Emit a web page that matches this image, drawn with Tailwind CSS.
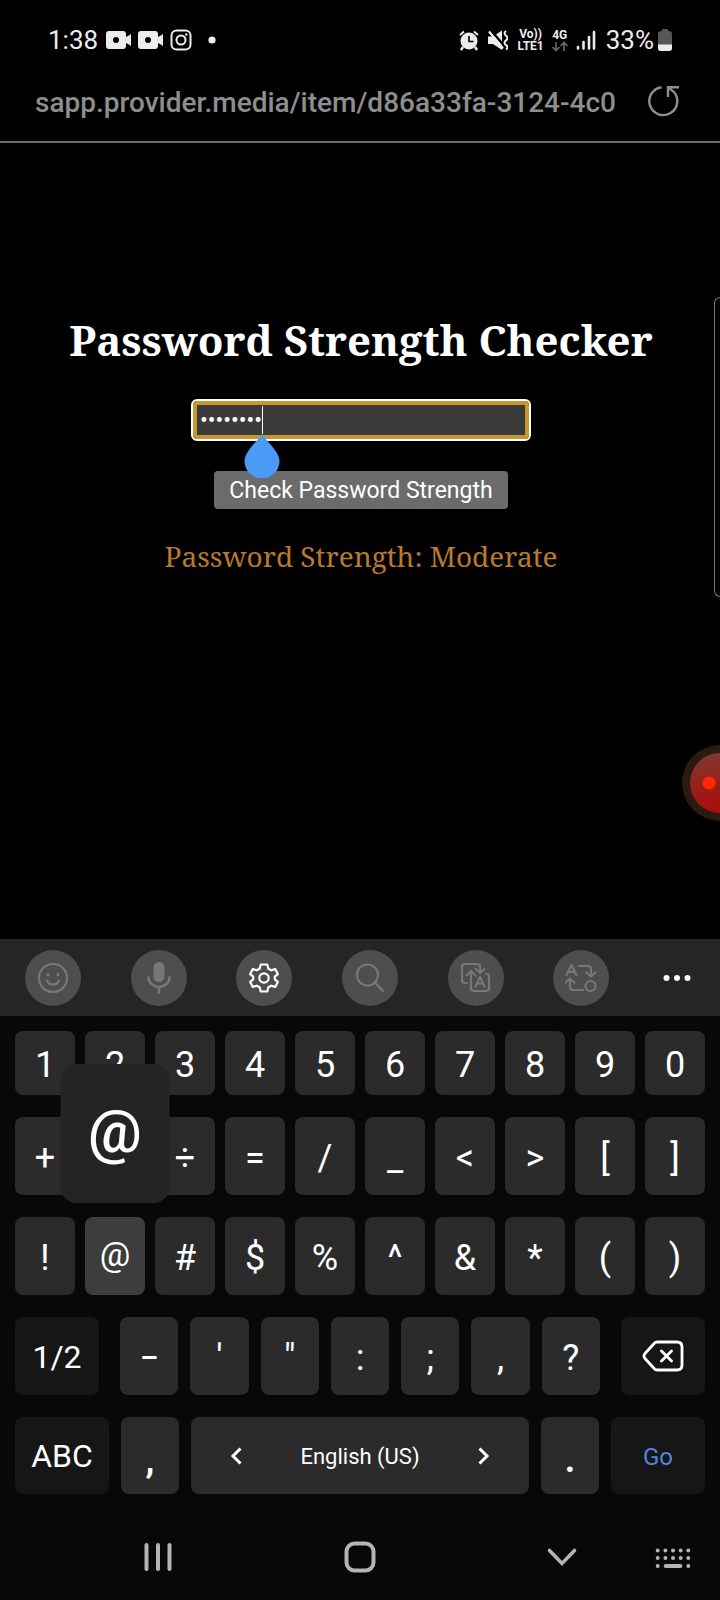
<!DOCTYPE html>
<html lang="en">
<head>
<meta charset="utf-8">
<meta name="viewport" content="width=device-width, initial-scale=1">
<title>Password Strength Checker</title>
<script src="https://cdn.jsdelivr.net/npm/@tailwindcss/browser@4"></script>
</head>
<body class="relative flex min-h-screen flex-col overflow-x-hidden bg-black font-['Roboto',sans-serif] text-white">

<!-- Status bar -->
<header class="flex h-16 items-center justify-between pt-4 pr-12 pl-12 text-[#ececec]">
  <div class="flex items-center">
    <span class="w-[58px] text-[26px] leading-8">1:38</span>
    <svg class="mr-1.5 h-[18px] w-[26px]" viewBox="0 0 26 18" fill="currentColor"><path fill-rule="evenodd" d="M3 0h14q3 0 3 3v3l2-1 3-2v12l-3-2-2-1v3q0 3-3 3H3q-3 0-3-3V3q0-3 3-3zm7 6a3 3 0 1 0 0 6 3 3 0 0 0 0-6z"/></svg>
    <svg class="mr-1.5 h-[18px] w-[26px]" viewBox="0 0 26 18" fill="currentColor"><path fill-rule="evenodd" d="M3 0h14q3 0 3 3v3l2-1 3-2v12l-3-2-2-1v3q0 3-3 3H3q-3 0-3-3V3q0-3 3-3zm7 6a3 3 0 1 0 0 6 3 3 0 0 0 0-6z"/></svg>
    <svg class="mr-4 h-[22px] w-[22px]" viewBox="0 0 22 22" fill="none" stroke="currentColor" stroke-width="2"><rect x="1.5" y="1.5" width="19" height="19" rx="5"/><circle cx="11" cy="11" r="4.5"/><circle cx="16.3" cy="5.5" r="1.2" fill="currentColor" stroke="none"/></svg>
    <svg class="h-2 w-2" viewBox="0 0 8 8" fill="currentColor"><circle cx="4" cy="4" r="3.6"/></svg>
  </div>
  <div class="flex items-center">
    <svg class="mr-[9px] h-[21px] w-5" viewBox="0 0 20 21" fill="none" stroke="currentColor"><circle cx="10" cy="11" r="8.500" fill="currentColor" stroke="none"/><path d="M1 5l4-3.500M19 5l-4-3.500" stroke-width="2"/><path d="M4 17l-2 3M16 17l2 3" stroke-width="2.500"/><path d="M10 6v5.500h4.500" stroke="#000" stroke-width="1.600"/></svg>
    <svg class="mr-[9px] h-[21px] w-5" viewBox="0 0 20 21" fill="currentColor"><path d="M0 6.500h5l9-6v19.500l-9-6H0z"/><path d="M1 -2l17 20" stroke="#000" stroke-width="2.500"/><path d="M1 1.500l14 17" stroke="currentColor" stroke-width="2.200"/><path d="M18 1q-3 2.300 0 4.700t0 4.700 0 4.700 0 4.400" fill="none" stroke="currentColor" stroke-width="2"/></svg>
    <span class="mr-2 flex flex-col items-center text-[12px] leading-[12px] font-bold"><span>Vo))</span><span>LTE1</span></span>
    <span class="mr-2 flex flex-col items-center text-[12px] leading-[12px] font-bold"><span>4G</span>
      <svg class="h-[11px] w-4" viewBox="0 0 16 11" fill="none" stroke="#666" stroke-width="1.700"><path d="M4 1v9M.5 6L4 9.500 7.500 6M12 10V1M8.500 5L12 1.500 15.500 5"/></svg></span>
    <svg class="mr-2.5 h-5 w-5" viewBox="0 0 20 20" fill="none" stroke="currentColor" stroke-width="2.600" stroke-linecap="round"><path d="M2 17v1.500M7.500 12v6.500M13 7v11.500M18 2v16.500"/></svg>
    <span class="mr-1 text-[26px] leading-8">33%</span>
    <svg class="h-[22px] w-[14px]" viewBox="0 0 14 22"><path d="M4 0h6v2h1q3 0 3 3v14q0 3-3 3H3q-3 0-3-3V5q0-3 3-3h1z" fill="#565656"/><path d="M0 15.500h14V19q0 3-3 3H3q-3 0-3-3z" fill="#ececec"/></svg>
  </div>
</header>

<!-- Address bar -->
<div class="flex h-[79px] items-center border-b-2 border-[#6b6b6b] pr-10 pl-[35px] text-[#8e8e8e]">
  <input type="text" aria-label="Address" readonly value="sapp.provider.media/item/d86a33fa-3124-4c0" class="h-10 min-w-0 flex-1 bg-transparent p-0 text-[28px] font-medium outline-none">
  <button aria-label="Reload" class="mb-1 ml-[30px] h-[34px] w-[32px]">
    <svg class="h-[34px] w-[32px]" viewBox="0 0 32 34" fill="none" stroke="currentColor" stroke-width="2.400"><path d="M13.500 3.200A14 14 0 1 0 25.500 7.500M20 13V3.200h11M20 3.200l6 5"/></svg>
  </button>
</div>

<!-- Page content -->
<main class="relative flex flex-1 flex-col items-center pt-[169px] pl-0.5 font-['Noto_Serif','Droid_Serif','DejaVu_Serif_Condensed','DejaVu_Serif',serif]">
  <h1 class="text-center text-[42px] leading-[56px] font-bold whitespace-nowrap">Password Strength Checker</h1>
  <div class="relative mt-[31px] w-[340px] max-w-full">
    <input type="password" aria-label="Password" value="password" class="block h-[42px] w-full rounded-md border-2 border-white bg-[#3b3b3b] px-[7px] font-['Roboto',sans-serif] text-[23px] text-white outline-4 -outline-offset-6 outline-[#c6982f]">
    <span class="absolute top-[7px] left-[71px] h-7 w-px bg-white"></span>
    <svg class="absolute top-[35px] left-[53px] z-10 h-11 w-9" viewBox="0 0 36 44" fill="#4a9af8"><path d="M18 0C21 6 35.500 17 35.500 27A17.500 17.500 0 0 1 .5 27C.5 17 15 6 18 0z"/></svg>
  </div>
  <button class="mt-[30px] h-[38px] rounded bg-[#6b6b6b] px-[15px] pt-0.5 font-['Roboto',sans-serif] text-[23px] leading-8 whitespace-nowrap">Check Password Strength</button>
  <p class="mt-[29px] text-[28px] leading-9 whitespace-nowrap text-[#b87a2c]">Password Strength: Moderate</p>

  <!-- Edge panel handle and recorder bubble -->
  <div class="absolute top-[154px] right-0 h-[300px] w-1.5 rounded-l-lg border border-r-0 border-[#777]"></div>
  <button aria-label="Stop recording" class="absolute top-[602px] right-0 h-[76px] w-[38px] overflow-hidden">
    <svg class="h-[76px] w-[38px]" viewBox="0 0 38 76"><defs><linearGradient id="rec" x1="0" y1="0" x2="0.300" y2="1"><stop offset="0" stop-color="#784032"/><stop offset=".5" stop-color="#95231c"/><stop offset="1" stop-color="#a80d0d"/></linearGradient></defs><circle cx="38" cy="38" r="38" fill="#2b1a10"/><circle cx="38" cy="38" r="30" fill="url(#rec)"/><circle cx="27" cy="38" r="6.500" fill="#ff2a05"/></svg>
  </button>
</main>

<!-- Keyboard -->
<section aria-label="Keyboard" class="bg-[#080808]">
  <div class="flex h-[77px] items-center justify-between bg-[#252525] pr-6 pl-[25px] text-[#777]">
    <button aria-label="Emoji" class="grid size-14 place-items-center rounded-full bg-[#4e4e4e]"><svg class="size-8" viewBox="0 0 32 32" fill="none" stroke="currentColor" stroke-width="2.200" stroke-linecap="round"><circle cx="16" cy="16" r="14"/><path d="M10 18.500q1.500 4 6 4t6-4"/><path d="M11 12.500v.2M21 12.500v.2" stroke-width="3.200"/></svg></button>
    <button aria-label="Voice input" class="grid size-14 place-items-center rounded-full bg-[#4e4e4e]"><svg class="size-8" viewBox="0 0 32 32" fill="none" stroke="currentColor" stroke-width="2.400" stroke-linecap="round"><rect x="10.500" y="0" width="11" height="20" rx="5.500" fill="currentColor" stroke="none"/><path d="M5.500 15.500a10.500 9.500 0 0 0 21 0M16 25v6"/></svg></button>
    <button aria-label="Settings" class="grid size-14 place-items-center rounded-full bg-[#4e4e4e] text-white"><svg class="size-8" viewBox="0 0 32 32" fill="none" stroke="currentColor" stroke-width="2.200" stroke-linejoin="round"><circle cx="16" cy="16" r="4.700"/><path d="M12.800 2.500h6.400l1.200 4.200 2.800 1.600 4-1.200 2.600 5-3 2.600v2.600l3 2.600-2.600 5-4-1.200-2.800 1.600-1.200 4.200h-6.400l-1.200-4.200-2.800-1.600-4 1.200-2.600-5 3-2.600v-2.600l-3-2.600 2.600-5 4 1.200 2.800-1.600z"/></svg></button>
    <button aria-label="Search" class="grid size-14 place-items-center rounded-full bg-[#4e4e4e]"><svg class="size-8" viewBox="0 0 32 32" fill="none" stroke="currentColor" stroke-width="2.200" stroke-linecap="round"><circle cx="13.500" cy="13" r="10.500"/><path d="M21 20.500l8 8.500"/></svg></button>
    <button aria-label="Translate" class="grid size-14 place-items-center rounded-full bg-[#4e4e4e]"><svg class="size-8" viewBox="0 0 32 32" fill="none" stroke="currentColor" stroke-width="2.200" stroke-linecap="round" stroke-linejoin="round"><path d="M7 21H5q-3 0-3-3V5q0-3 3-3h12q3 0 3 3v5M15.500 7l4.500 4 4.500-4M11 22V10M6.500 13.500L11 9l4.500 4.500M11 22v4q0 3 3 3h12q3 0 3-3V14q0-2-3-2"/><path d="M15.500 24.500L20 15l4.500 9.500M17 21.500h6"/></svg></button>
    <button aria-label="Text conversion" class="grid size-14 place-items-center rounded-full bg-[#4e4e4e]"><svg class="size-8" viewBox="0 0 32 32" fill="none" stroke="currentColor" stroke-width="2.200" stroke-linecap="round" stroke-linejoin="round"><path d="M1.500 13L6.500 3l5 10M3.500 10h6M14 4h9q3 0 3 3v7M21.500 10.500L26 14.500l4.500-4M18 28H8q-3 0-3-3v-8M.5 20.500L5 16.500l4.500 4"/><circle cx="25.500" cy="24" r="5"/></svg></button>
    <button aria-label="More" class="grid h-14 w-[37px] place-items-center text-white"><svg class="h-2 w-7" viewBox="0 0 28 8" fill="currentColor"><circle cx="3.500" cy="4" r="3"/><circle cx="14" cy="4" r="3"/><circle cx="24.500" cy="4" r="3"/></svg></button>
  </div>

  <div class="flex flex-col gap-[22px] px-[15px] pt-[15px] text-[36px]">
    <div class="grid h-16 grid-cols-10 gap-2.5">
      <button class="rounded-lg bg-[#2b2b2b] pt-1">1</button><button class="rounded-lg bg-[#2b2b2b] pt-1">2</button><button class="rounded-lg bg-[#2b2b2b] pt-1">3</button><button class="rounded-lg bg-[#2b2b2b] pt-1">4</button><button class="rounded-lg bg-[#2b2b2b] pt-1">5</button><button class="rounded-lg bg-[#2b2b2b] pt-1">6</button><button class="rounded-lg bg-[#2b2b2b] pt-1">7</button><button class="rounded-lg bg-[#2b2b2b] pt-1">8</button><button class="rounded-lg bg-[#2b2b2b] pt-1">9</button><button class="rounded-lg bg-[#2b2b2b] pt-1">0</button>
    </div>
    <div class="grid h-[78px] grid-cols-10 gap-2.5">
      <button class="rounded-lg bg-[#2b2b2b] pt-1">+</button><button aria-label="Multiply" class="rounded-lg bg-[#2b2b2b]"></button><button class="rounded-lg bg-[#2b2b2b] pt-1">÷</button><button class="rounded-lg bg-[#2b2b2b] pt-1">=</button><button class="rounded-lg bg-[#2b2b2b] pt-1">/</button><button class="rounded-lg bg-[#2b2b2b] pt-1">_</button><button class="rounded-lg bg-[#2b2b2b] pt-1">&lt;</button><button class="rounded-lg bg-[#2b2b2b] pt-1">&gt;</button><button class="rounded-lg bg-[#2b2b2b] pt-1">[</button><button class="rounded-lg bg-[#2b2b2b] pt-1">]</button>
    </div>
    <div class="grid h-[78px] grid-cols-10 gap-2.5">
      <button class="rounded-lg bg-[#2b2b2b] pt-1">!</button>
      <button class="relative rounded-lg bg-[#3d3d3d] pb-1 text-[34px]">@<span class="absolute bottom-full left-1/2 mb-3.5 flex h-[139px] w-[109px] -translate-x-1/2 items-center justify-center rounded-2xl bg-[#242424] pb-1 text-[60px] font-medium">@</span></button>
      <button class="rounded-lg bg-[#2b2b2b] pt-1">#</button><button class="rounded-lg bg-[#2b2b2b] pt-1">$</button><button class="rounded-lg bg-[#2b2b2b] pt-1">%</button><button class="rounded-lg bg-[#2b2b2b] pt-1">^</button><button class="rounded-lg bg-[#2b2b2b] pt-1">&amp;</button><button class="rounded-lg bg-[#2b2b2b] pt-1">*</button><button class="rounded-lg bg-[#2b2b2b] pt-1">(</button><button class="rounded-lg bg-[#2b2b2b] pt-1">)</button>
    </div>
    <div class="grid h-[78px] grid-cols-[84fr_480fr_84fr] gap-[21px]">
      <button class="rounded-lg bg-[#161616] pt-0.5 text-[32px]">1/2</button>
      <div class="grid grid-cols-7 gap-3">
        <button class="rounded-lg bg-[#2b2b2b] pt-1 text-[28px] font-bold">–</button><button class="rounded-lg bg-[#2b2b2b] pt-1">'</button><button class="rounded-lg bg-[#2b2b2b] pt-1">"</button><button class="rounded-lg bg-[#2b2b2b] pt-1">:</button><button class="rounded-lg bg-[#2b2b2b] pt-1">;</button><button class="rounded-lg bg-[#2b2b2b] pt-1">,</button><button class="rounded-lg bg-[#2b2b2b] pt-1">?</button>
      </div>
      <button aria-label="Backspace" class="grid place-items-center rounded-lg bg-[#161616]"><svg class="h-8 w-[42px]" viewBox="0 0 42 32" fill="none" stroke="currentColor" stroke-width="2.800" stroke-linecap="round" stroke-linejoin="round"><path d="M15 2h20q5 0 5 5v18q0 5-5 5H15q-1.500 0-2.600-1.200L3 18.500q-2-2.500 0-5l9.400-10.300Q13.500 2 15 2zM19.500 11l10 10M29.500 11l-10 10"/></svg></button>
    </div>
    <div class="grid h-[77px] grid-cols-[94fr_58fr_338fr_58fr_94fr] gap-3">
      <button class="rounded-lg bg-[#161616] text-[32px]">ABC</button>
      <button class="rounded-lg bg-[#2b2b2b] pt-2 font-bold">,</button>
      <button class="flex items-center justify-between rounded-lg bg-[#2b2b2b] px-[39px] text-[22px]">
        <svg class="h-[18px] w-3" viewBox="0 0 12 18" fill="none" stroke="currentColor" stroke-width="3"><path d="M10.500 1.500L3 9l7.500 7.500"/></svg>
        <span class="pt-0.5">English (US)</span>
        <svg class="h-[18px] w-3" viewBox="0 0 12 18" fill="none" stroke="currentColor" stroke-width="3"><path d="M1.500 1.500L9 9l-7.500 7.500"/></svg>
      </button>
      <button class="rounded-lg bg-[#2b2b2b] pt-2 font-bold">.</button>
      <button class="rounded-lg bg-[#161616] pt-0.5 text-[24px] text-[#4f87d9]">Go</button>
    </div>
  </div>

  <!-- System navigation -->
  <nav aria-label="System navigation" class="mt-[33px] grid h-[73px] grid-cols-[128fr_60px_142fr_60px_142fr_60px_51fr_60px_17fr] pb-[13px] text-[#b4b4b4]">
    <button aria-label="Recent apps" class="col-start-2 grid place-items-center"><svg class="h-8 w-8" viewBox="0 0 32 32" fill="none" stroke="currentColor" stroke-width="4" stroke-linecap="round"><path d="M4.500 4v24M16 4v24M27.500 4v24"/></svg></button>
    <button aria-label="Home" class="col-start-4 grid place-items-center"><svg class="h-8 w-8" viewBox="0 0 32 32" fill="none" stroke="currentColor" stroke-width="4"><rect x="2.500" y="2.500" width="27" height="27" rx="8"/></svg></button>
    <button aria-label="Hide keyboard" class="col-start-6 grid place-items-center"><svg class="h-8 w-8" viewBox="0 0 32 32" fill="none" stroke="currentColor" stroke-width="3.600" stroke-linecap="round"><path d="M3.500 9.500L16 22.500 28.500 9.500"/></svg></button>
    <button aria-label="Switch keyboard" class="col-start-8 grid place-items-center"><svg class="h-8 w-9" viewBox="0 0 36 32" fill="none" stroke="currentColor" stroke-width="4" stroke-linecap="round"><path d="M2.700 9.500v.1M10.400 9.500v.1M18 9.500v.1M25.700 9.500v.1M33.300 9.500v.1M2.700 17v.1M10.400 17v.1M18 17v.1M25.700 17v.1M33.300 17v.1M2.700 25v.1M10.700 25h14.700M33.300 25v.1"/></svg></button>
  </nav>
</section>
</body>
</html>
